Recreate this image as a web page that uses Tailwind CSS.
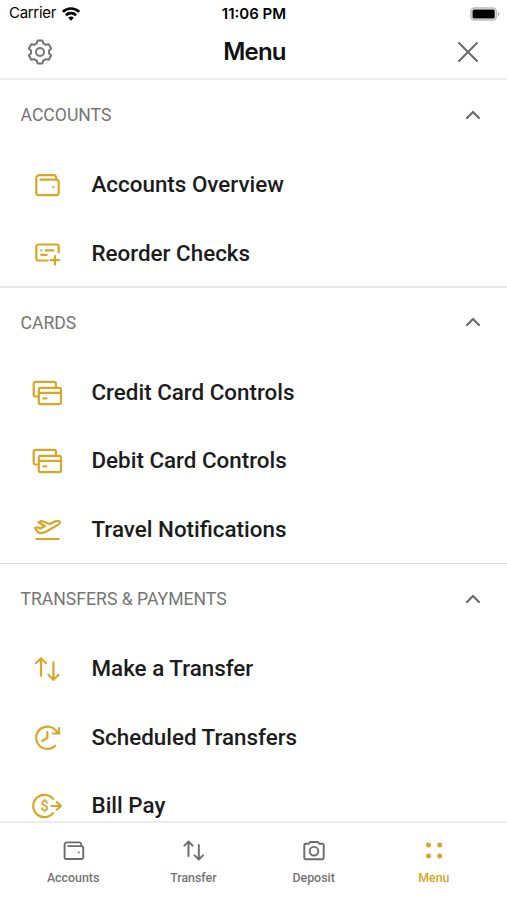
<!DOCTYPE html>
<html lang="en">

<head>
    <meta charset="UTF-8">
    <meta name="viewport" content="width=device-width, initial-scale=1.0">
    <title>Menu</title>
    <script src="https://cdn.jsdelivr.net/npm/@tailwindcss/browser@4"></script>
</head>

<body class="bg-white h-[900px] flex flex-col overflow-hidden font-[Roboto,sans-serif] text-[#1c1c1c]">
    <!-- Shared icons -->
    <svg class="hidden">
        <symbol id="wallet" viewBox="0 0 30 30">
            <path d="M8.5 9.7H24.2a2.5 2.5 0 0 1 2.5 2.5V23a2.2 2.2 0 0 1-2.2 2.2H6.5A2.2 2.2 0 0 1 4.3 23V8.2a3 3 0 0 1 3-3H21.8a2.5 2.5 0 0 1 2.5 2.5v2" />
            <path d="M21.3 17.2h.1" />
        </symbol>
        <symbol id="transfer" viewBox="0 0 30 30">
            <path d="M9 21.7V4.3M4 9.2 9 4.2l5 5M21.4 8.4v17.4M16.3 20.8l5.1 5 5.1-5" />
        </symbol>
        <symbol id="cards" viewBox="0 0 30 30">
            <path d="M6.5 18.5H3.7a2 2 0 0 1-2-2V5.8a2 2 0 0 1 2-2H22a2 2 0 0 1 2 2V9" />
            <rect x="6.8" y="9.8" width="22.2" height="16.4" rx="2" />
            <path d="M7 14.9h22M11.4 20.3h3" />
        </symbol>
        <symbol id="chevron" viewBox="0 0 16 10">
            <path d="M2 8 8 2l6 6" />
        </symbol>
    </svg>

    <!-- Status bar -->
    <div class="h-7 shrink-0 grid grid-cols-3 items-center pl-[9px] pr-[7px] font-[Inter,sans-serif] text-black">
        <div class="flex items-center gap-1.5 pb-px">
            <span class="text-[15px] tracking-[-0.3px]">Carrier</span>
            <svg class="w-[18px] h-[14px]" viewBox="0 0 18 14" fill="none" stroke="#000" stroke-width="2.7">
                <path d="M.9 4.8a11.6 11.6 0 0 1 16.2 0M3.9 8.2a7.3 7.3 0 0 1 10.2 0" />
                <path d="M9 13.7 6.2 10.8a4 4 0 0 1 5.6 0Z" fill="#000" stroke="none" />
            </svg>
        </div>
        <span class="text-center text-[15px] font-semibold whitespace-nowrap pr-px">11:06 PM</span>
        <svg class="w-[30px] h-[14px] justify-self-end mb-px" viewBox="0 0 31 14">
            <rect x="1" y=".8" width="26.2" height="12.4" rx="3.6" fill="#fff" stroke="#bbb" stroke-width="1.6" />
            <rect x="2.6" y="2.3" width="23" height="9.4" rx="1.6" />
            <path d="M28.9 5v4q1.6-.6 1.6-2t-1.6-2Z" fill="#aaa" />
        </svg>
    </div>

    <!-- Header -->
    <header class="h-[52px] shrink-0 flex items-center justify-between px-[27px] pb-0.5 border-b-2 border-[#eee]">
        <svg class="w-[26px] h-[26px]" viewBox="0 0 24 24" fill="none" stroke="#757575" stroke-width="1.9" stroke-linejoin="round">
            <path d="M9.8 1.4H14.2L15 4l2.4 1.4 2.7-.6 2.2 3.9L20.4 10.6v2.8l1.9 1.9-2.2 3.9-2.7-.6L15 20l-.8 2.6H9.8L9 20l-2.4-1.4-2.7.6-2.2-3.9L3.6 13.4v-2.8L1.7 8.7l2.2-3.9 2.7.6L9 4Z" />
            <circle cx="12" cy="12" r="3.7" />
        </svg>
        <h1 class="font-[Inter,sans-serif] text-2xl font-semibold tracking-[-0.8px] text-[#111]">Menu</h1>
        <svg class="w-[24px] h-[24px]" viewBox="0 0 24 24" fill="none" stroke="#6b6b6b" stroke-width="2" stroke-linecap="round">
            <path d="m3 3 18 18M21 3 3 21" />
        </svg>
    </header>

    <!-- Menu list -->
    <main class="flex-1 min-h-0 overflow-hidden text-[22.4px] font-medium">
        <section class="h-[208px] border-b-2 border-[#e8e8e8]">
            <div class="h-[71px] flex items-center justify-between pl-[20.5px] pr-[26px] text-[#757575]">
                <h2 class="text-[17.6px] font-normal">ACCOUNTS</h2>
                <svg class="w-4 h-2.5 mb-0.5" fill="none" stroke="#6b6b6b" stroke-width="2.2" stroke-linecap="round"><use href="#chevron" /></svg>
            </div>
            <div class="h-[68.4px] flex items-center gap-[29.5px] pl-8">
                <svg class="size-[30px]" fill="none" stroke="#d9a628" stroke-width="2.2" stroke-linecap="round"><use href="#wallet" /></svg>
                <span>Accounts Overview</span>
            </div>
            <div class="h-[68.4px] flex items-center gap-[29.5px] pl-8">
                <svg class="size-[30px]" viewBox="0 0 30 30" fill="none" stroke="#d9a628" stroke-width="2.2" stroke-linecap="round">
                    <path d="M15.8 21.5H6.3a2 2 0 0 1-2-2V7.5a2 2 0 0 1 2-2H24.7a2 2 0 0 1 2 2V13.5" />
                    <path d="M9.2 11.3h.1M13.8 11.3h7.7M9.2 15.8h5.5M22.9 17v8.4M18.7 21.2h8.4" />
                </svg>
                <span>Reorder Checks</span>
            </div>
        </section>

        <section class="h-[276px] border-b border-[#dcdcdc]">
            <div class="h-[70.5px] flex items-center justify-between pl-[20.5px] pr-[26px] text-[#757575]">
                <h2 class="text-[17.6px] font-normal">CARDS</h2>
                <svg class="w-4 h-2.5 mb-0.5" fill="none" stroke="#6b6b6b" stroke-width="2.2" stroke-linecap="round"><use href="#chevron" /></svg>
            </div>
            <div class="h-[68.5px] flex items-center gap-[29.5px] pl-8">
                <svg class="size-[30px]" fill="none" stroke="#d9a628" stroke-width="2.2" stroke-linecap="round"><use href="#cards" /></svg>
                <span>Credit Card Controls</span>
            </div>
            <div class="h-[68.5px] flex items-center gap-[29.5px] pl-8">
                <svg class="size-[30px]" fill="none" stroke="#d9a628" stroke-width="2.2" stroke-linecap="round"><use href="#cards" /></svg>
                <span>Debit Card Controls</span>
            </div>
            <div class="h-[68.5px] flex items-center gap-[29.5px] pl-8">
                <svg class="size-[30px]" viewBox="0 0 30 30" fill="none" stroke="#d9a628" stroke-width="2.2" stroke-linecap="round" stroke-linejoin="round">
                    <path d="M3 13.2 5.2 12.3 8.3 13.5 13 11.3 6.5 7.2 9.6 6 17.7 9 23.5 6.3c4-1.5 5.8 1.5 2.7 3.3L14 16.8c-3 1.5-6.5 1.5-8.5 0Z" />
                    <path d="M4.3 24h22.5" />
                </svg>
                <span>Travel Notifications</span>
            </div>
        </section>

        <section>
            <div class="h-[71px] flex items-center justify-between pl-[20.5px] pr-[26px] text-[#757575]">
                <h2 class="text-[17.6px] font-normal">TRANSFERS &amp; PAYMENTS</h2>
                <svg class="w-4 h-2.5 mb-0.5" fill="none" stroke="#6b6b6b" stroke-width="2.2" stroke-linecap="round"><use href="#chevron" /></svg>
            </div>
            <div class="h-[68.4px] flex items-center gap-[29.5px] pl-8">
                <svg class="size-[30px]" fill="none" stroke="#d9a628" stroke-width="2.2" stroke-linecap="round" stroke-linejoin="round"><use href="#transfer" /></svg>
                <span>Make a Transfer</span>
            </div>
            <div class="h-[68.4px] flex items-center gap-[29.5px] pl-8">
                <svg class="size-[30px]" viewBox="0 0 30 30" fill="none" stroke="#d9a628" stroke-width="2.2" stroke-linecap="round">
                    <path d="M23.2 22.8A11.2 11.2 0 1 1 25.5 10" />
                    <path d="M27 5.2v5.3h-6M15.3 9v6l-5 3" />
                </svg>
                <span>Scheduled Transfers</span>
            </div>
            <div class="h-[68.4px] flex items-center gap-[29.5px] pl-8">
                <svg class="size-[30px]" viewBox="0 0 30 30" fill="none" stroke="#d9a628" stroke-width="2.2" stroke-linecap="round">
                    <path d="M21 22.2A11.2 11.2 0 1 1 21 7.8M19.5 15h9.5M24.8 11.2l4.2 3.8-4.2 3.8" />
                    <text x="12.5" y="20.1" text-anchor="middle" font-size="15" fill="#d9a628" stroke="none">$</text>
                </svg>
                <span>Bill Pay</span>
            </div>
        </section>
    </main>

    <!-- Bottom tabs -->
    <nav class="h-[79px] shrink-0 border-t-2 border-[#ececec] grid grid-cols-4 px-[13px] pt-[14.5px] bg-white text-[12.4px] leading-5 font-medium text-[#757575]">
        <div class="flex flex-col items-center gap-[5px]">
            <svg class="size-[25px]" fill="none" stroke="#6b6b6b" stroke-width="2.3" stroke-linecap="round"><use href="#wallet" /></svg>
            <span>Accounts</span>
        </div>
        <div class="flex flex-col items-center gap-[5px]">
            <svg class="size-[25px]" fill="none" stroke="#6b6b6b" stroke-width="2.3" stroke-linecap="round" stroke-linejoin="round"><use href="#transfer" /></svg>
            <span>Transfer</span>
        </div>
        <div class="flex flex-col items-center gap-[5px]">
            <svg class="size-[25px]" viewBox="0 0 25 25" fill="none" stroke="#6b6b6b" stroke-width="1.9" stroke-linejoin="round">
                <path d="M4.5 5.8H7.8L9 4h8l1.2 1.8H21.5A1.2 1.2 0 0 1 22.7 7V20A1.2 1.2 0 0 1 21.5 21.2H4.5A1.2 1.2 0 0 1 3.3 20V7A1.2 1.2 0 0 1 4.5 5.8Z" />
                <circle cx="13" cy="13.2" r="4.3" />
            </svg>
            <span>Deposit</span>
        </div>
        <div class="flex flex-col items-center gap-[5px] text-[#d9a628]">
            <svg class="size-[25px]" viewBox="0 0 25 25" fill="#d9a628">
                <circle cx="7.5" cy="6.9" r="2.5" />
                <circle cx="18.7" cy="6.9" r="2.5" />
                <circle cx="7.5" cy="18" r="2.5" />
                <circle cx="18.7" cy="18" r="2.5" />
            </svg>
            <span>Menu</span>
        </div>
    </nav>
</body>

</html>
